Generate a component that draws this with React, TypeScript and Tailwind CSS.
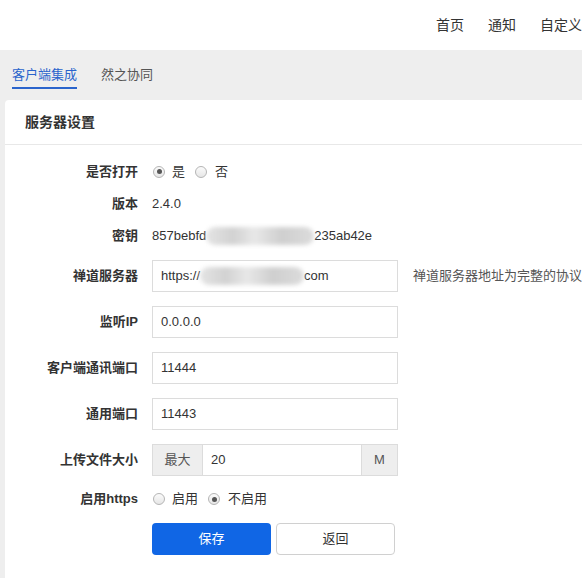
import { ReactNode } from 'react'

const font = { fontFamily: '"Liberation Sans", "Noto Sans CJK SC", sans-serif' }

function Radio({ checked }: { checked?: boolean }) {
	return (
		<span className="inline-flex h-[12px] w-[12px] shrink-0 items-center justify-center rounded-full border border-[#b5b5b5] bg-[linear-gradient(#fbfbfb,#e6e6e6)]">
			{checked && <span className="h-[5px] w-[5px] rounded-full bg-[#555]" />}
		</span>
	)
}

// gray smudge over hidden parts of values
function Smudge({ w }: { w: number }) {
	return (
		<span
			className="inline-block h-[18px] rounded-full bg-[linear-gradient(90deg,#e4e4e4,#d2d2d2_25%,#e8e8e8_45%,#cfcfcf_70%,#dcdcdc)] blur-[2px]"
			style={{ width: w }}
		/>
	)
}

function Row({ label, children, className = '' }: { label: string; children: ReactNode; className?: string }) {
	return (
		<div className={`flex h-[32px] items-center ${className}`}>
			<div className="w-[133px] shrink-0 text-right text-[13px] font-bold text-[#333]">{label}</div>
			<div className="ml-[14px] flex min-w-0 items-center">{children}</div>
		</div>
	)
}

function Input({ value }: { value: ReactNode }) {
	return (
		<div className="flex h-[32px] w-[246px] shrink-0 items-center border border-[#dcdcdc] bg-white px-[8px] text-[13px] text-[#333]">
			{value}
		</div>
	)
}

export default function App() {
	return (
		<div className="min-h-[578px] overflow-hidden bg-[#eeeeee]" style={font}>
			<div className="flex h-[50px] items-center whitespace-nowrap bg-white pl-[424px] text-[14px] text-[#333]">
				<span className="px-[12px]">首页</span>
				<span className="px-[12px]">通知</span>
				<span className="px-[12px]">自定义</span>
			</div>

			<div className="flex h-[50px] gap-[24px] px-[12px] pt-[16px] text-[13px]">
				<div className="h-[23px] border-b-[2px] border-[#2a64cc] pb-[3px] leading-[18px] text-[#2a64cc]">客户端集成</div>
				<div className="leading-[18px] text-[#555]">然之协同</div>
			</div>

			<div className="ml-[5px] min-h-[478px] rounded-tl-[4px] bg-white">
				<div className="flex h-[45px] items-center border-b border-[#e8e8e8] px-[20px] text-[14px] font-bold text-[#333]">
					服务器设置
				</div>

				<div className="pt-[10px] text-[13px] text-[#333]">
					<Row label="是否打开" className="h-[33px]">
						<span className="ml-[1px] flex items-center gap-[7px]">
							<Radio checked />
							<span>是</span>
						</span>
						<span className="ml-[10px] flex items-center gap-[8px]">
							<Radio />
							<span>否</span>
						</span>
					</Row>
					<Row label="版本">2.4.0</Row>
					<Row label="密钥">
						<span>857bebfd</span>
						<Smudge w={108} />
						<span>235ab42e</span>
					</Row>
					<Row label="禅道服务器" className="mt-[8px]">
						<Input
							value={
								<>
									<span>https://</span>
									<Smudge w={104} />
									<span>com</span>
								</>
							}
						/>
						<span className="ml-[15px] whitespace-nowrap text-[#555]">禅道服务器地址为完整的协议+主机名+端口</span>
					</Row>
					<Row label="监听IP" className="mt-[14px]">
						<Input value="0.0.0.0" />
					</Row>
					<Row label="客户端通讯端口" className="mt-[14px]">
						<Input value="11444" />
					</Row>
					<Row label="通用端口" className="mt-[14px]">
						<Input value="11443" />
					</Row>
					<Row label="上传文件大小" className="mt-[14px]">
						<div className="flex h-[32px] w-[246px] border border-[#dcdcdc] text-[13px]">
							<span className="flex w-[50px] items-center justify-center border-r border-[#dcdcdc] bg-[#eeeeee] text-[#555]">最大</span>
							<span className="flex flex-1 items-center px-[8px] text-[#333]">20</span>
							<span className="flex w-[36px] items-center justify-center border-l border-[#dcdcdc] bg-[#eeeeee] text-[#555]">M</span>
						</div>
					</Row>
					<Row label="启用https" className="mt-[7px]">
						<span className="ml-[1px] flex items-center gap-[7px]">
							<Radio />
							<span>启用</span>
						</span>
						<span className="ml-[10px] flex items-center gap-[8px]">
							<Radio checked />
							<span>不启用</span>
						</span>
					</Row>
					<Row label="" className="mt-[8px]">
						<button className="h-[32px] w-[119px] rounded-[4px] bg-[#1066e5] text-[13px] text-white">保存</button>
						<button className="ml-[5px] h-[32px] w-[119px] rounded-[4px] border border-[#d0d0d0] bg-white text-[13px] text-[#333]">返回</button>
					</Row>
				</div>
			</div>
		</div>
	)
}
